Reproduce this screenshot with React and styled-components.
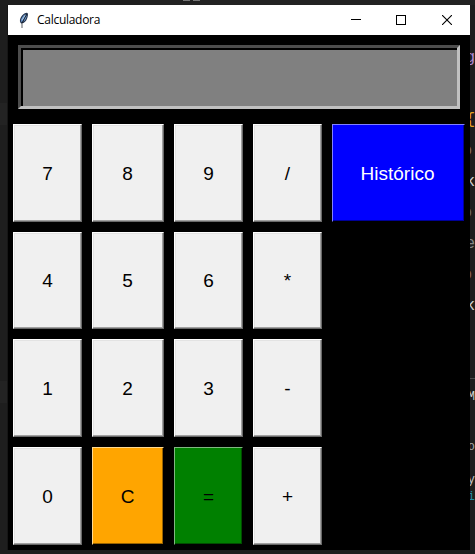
import React from "react";
import styled, { createGlobalStyle } from "styled-components";

const Global = createGlobalStyle`
  * { box-sizing: border-box; }
  html, body { margin: 0; background: #1e1e1e; overflow: hidden; }
`;

const Desktop = styled.div`
  display: grid;
  grid-template-columns: 8px 462px 5px;
  grid-template-rows: 5px 545px 4px;
  width: 475px;
  height: 554px;
  overflow: hidden;
  background: #1e1e1e;
`;

const TopEdge = styled.div`
  grid-column: 1 / -1;
  display: flex;
  justify-content: center;
  gap: 3px;
  padding-right: 92px;
  background: linear-gradient(90deg, #1e1e1e 140px, #222 140px);
`;

const TabMark = styled.div`
  width: 7px;
  height: 1px;
  background: #777;
`;

const LeftEdge = styled.div`
  border-right: 1px solid #161616;
  background: linear-gradient(
    #1e1e1e 98px, #232323 98px 120px,
    #1e1e1e 120px 376px, #232323 376px 398px, #1e1e1e 398px
  );
`;

const EditorEdge = styled.aside`
  display: flex;
  flex-direction: column;
  gap: 57px;
  padding-top: 37px;
  overflow: hidden;
`;

const CodePane = styled.div`
  display: grid;
  grid-template-columns: 5px;
  grid-auto-rows: 31px;
`;

const TerminalPane = styled.div`
  display: grid;
  grid-template-columns: 5px;
  grid-auto-rows: 16.6px;
  padding-top: 10px;
  border-top: 1px solid #4a4a4a;
`;

const EditorLine = styled.div`
  display: flex;
  align-items: center;
  justify-content: flex-end;
  min-width: 0;
  padding-right: ${(p) => p.$inset || 0}px;
  color: ${(p) => p.$color};
  font-family: "Liberation Mono", monospace;
  font-size: ${(p) => p.$size}px;
  line-height: 1;
`;

const Window = styled.main`
  background: #000;
`;

const TitleBar = styled.header`
  display: flex;
  align-items: center;
  height: 30px;
  padding-left: 9px;
  background: #fff;
`;

const Title = styled.h1`
  flex: 1;
  margin: 0 0 0 4px;
  color: #000;
  font: 400 12px/30px "Open Sans", sans-serif;
  letter-spacing: -0.28px;
`;

const WindowButton = styled.button`
  display: flex;
  align-items: center;
  justify-content: center;
  width: 46px;
  height: 30px;
  padding: ${(p) => (p.$minimize ? "0 0 0 2px" : "0")};
  border: 0;
  background: transparent;
`;

const Calculator = styled.div`
  display: flex;
  flex-direction: column;
  gap: 15px;
  padding: 10px 5px 5px;
`;

const Display = styled.output`
  display: block;
  height: 64px;
  margin: 0 5px;
  border: 3px solid;
  border-color: #4d4d4d #c0c0c0 #c0c0c0 #4d4d4d;
  background: #808080;
  box-shadow: inset 2px 2px #000;
`;

const Keypad = styled.section`
  display: grid;
  grid-template-columns: 69px 72px 69px 69px 133px;
  grid-template-rows: 98px 97px 98px 98px;
  gap: 10px;
`;

const tones = {
  plain: { bg: "#f0f0f0", fg: "#000", hi: "#fff", hi2: "#e3e3e3", lo: "#a0a0a0", edge: "#696969" },
  orange: { bg: "#ffa500", fg: "#000", hi: "#ffd990", hi2: "#ffa500", lo: "#996300", edge: "#000" },
  green: { bg: "#008000", fg: "#000", hi: "#80b880", hi2: "#008000", lo: "#004d00", edge: "#000" },
  blue: { bg: "#0000ff", fg: "#fff", hi: "#8080ff", hi2: "#0000ff", lo: "#000099", edge: "#000" },
};

const Key = styled.button`
  grid-column: ${(p) => p.$col};
  padding: 1px ${(p) => (p.$col === 5 ? 2 : p.$col === 2 ? 1 : 0)}px 0 0;
  border: 1px solid;
  border-color: ${({ $tone: t }) => `${t.hi} ${t.edge} ${t.edge} ${t.hi}`};
  color: ${(p) => p.$tone.fg};
  background: ${(p) => p.$tone.bg};
  box-shadow: ${({ $tone: t }) => `inset -1px -1px ${t.lo}, inset 1px 1px ${t.hi2}`};
  font: 19px/22px "Liberation Sans", Arial, sans-serif;
`;

const keys = [
  ["7", 1], ["8", 2], ["9", 3], ["/", 4], ["Histórico", 5, "blue"],
  ["4", 1], ["5", 2], ["6", 3], ["*", 4],
  ["1", 1], ["2", 2], ["3", 3], ["-", 4],
  ["0", 1], ["C", 2, "orange"], ["=", 3, "green"], ["+", 4],
];

const codeLines = [
  ["g", "#b48ad6"], ["", "#000"], ["{", "#e8a020"],
  ["o", "#806c62", 3], ["k", "#d0d0d0"], ["o", "#666", 3],
  ["e", "#858585"], ["o", "#806058", 3], ["k", "#d0d0d0"],
];

const terminalLines = [
  ["M", "#d4d4d4"], ["", "#000"], ["", "#000"], ["o", "#a8a8a8"],
  ["", "#000"], ["y", "#c8c8c8"], ["i", "#238da5"],
];

function Feather() {
  return (
    <svg width="16" height="18" viewBox="0 0 16 18" aria-hidden="true">
      <path d="M4.2 12.5 Q2 10.5 3.5 7 Q5.5 2.5 9.8 1.8 Q11.5 2 10.8 5 Q10 10 6.5 12Z" fill="#24344e" />
      <path d="M3.8 10.5 Q4 6 8.5 3 Q8 7 5 11Z" fill="#6a94c9" />
      <path d="M6 11 Q9.5 8.5 9.8 4 Q7.5 7 6 11Z" fill="#769fd0" />
      <path d="M5 9 L8.8 3.8" stroke="#b4d1ec" strokeWidth=".9" />
      <path d="M5 17 L5 12.5 L9.7 3" fill="none" stroke="#111820" strokeWidth=".7" />
    </svg>
  );
}

export default function App() {
  return (
    <>
      <Global />
      <Desktop>
        <TopEdge>
          <TabMark />
          <TabMark />
        </TopEdge>
        <LeftEdge />
        <Window>
          <TitleBar>
            <Feather />
            <Title>Calculadora</Title>
            <WindowButton $minimize aria-label="Minimizar">
              <svg width="10" height="10" shapeRendering="crispEdges"><path d="M0 4.5H10" stroke="#000" /></svg>
            </WindowButton>
            <WindowButton aria-label="Maximizar">
              <svg width="10" height="10" shapeRendering="crispEdges"><rect x=".5" y=".5" width="9" height="9" fill="none" stroke="#000" /></svg>
            </WindowButton>
            <WindowButton aria-label="Fechar">
              <svg width="10" height="10"><path d="M0 0L10 10M10 0L0 10" stroke="#000" strokeWidth="1.1" /></svg>
            </WindowButton>
          </TitleBar>
          <Calculator>
            <Display />
            <Keypad>
              {keys.map(([label, col, tone = "plain"]) => (
                <Key key={label} $col={col} $tone={tones[tone]}>{label}</Key>
              ))}
            </Keypad>
          </Calculator>
        </Window>
        <EditorEdge>
          <CodePane>
            {codeLines.map(([text, color, inset], i) => (
              <EditorLine key={i} $color={color} $inset={inset} $size={16}>{text}</EditorLine>
            ))}
          </CodePane>
          <TerminalPane>
            {terminalLines.map(([text, color], i) => (
              <EditorLine key={i} $color={color} $size={12}>{text}</EditorLine>
            ))}
          </TerminalPane>
        </EditorEdge>
      </Desktop>
    </>
  );
}
